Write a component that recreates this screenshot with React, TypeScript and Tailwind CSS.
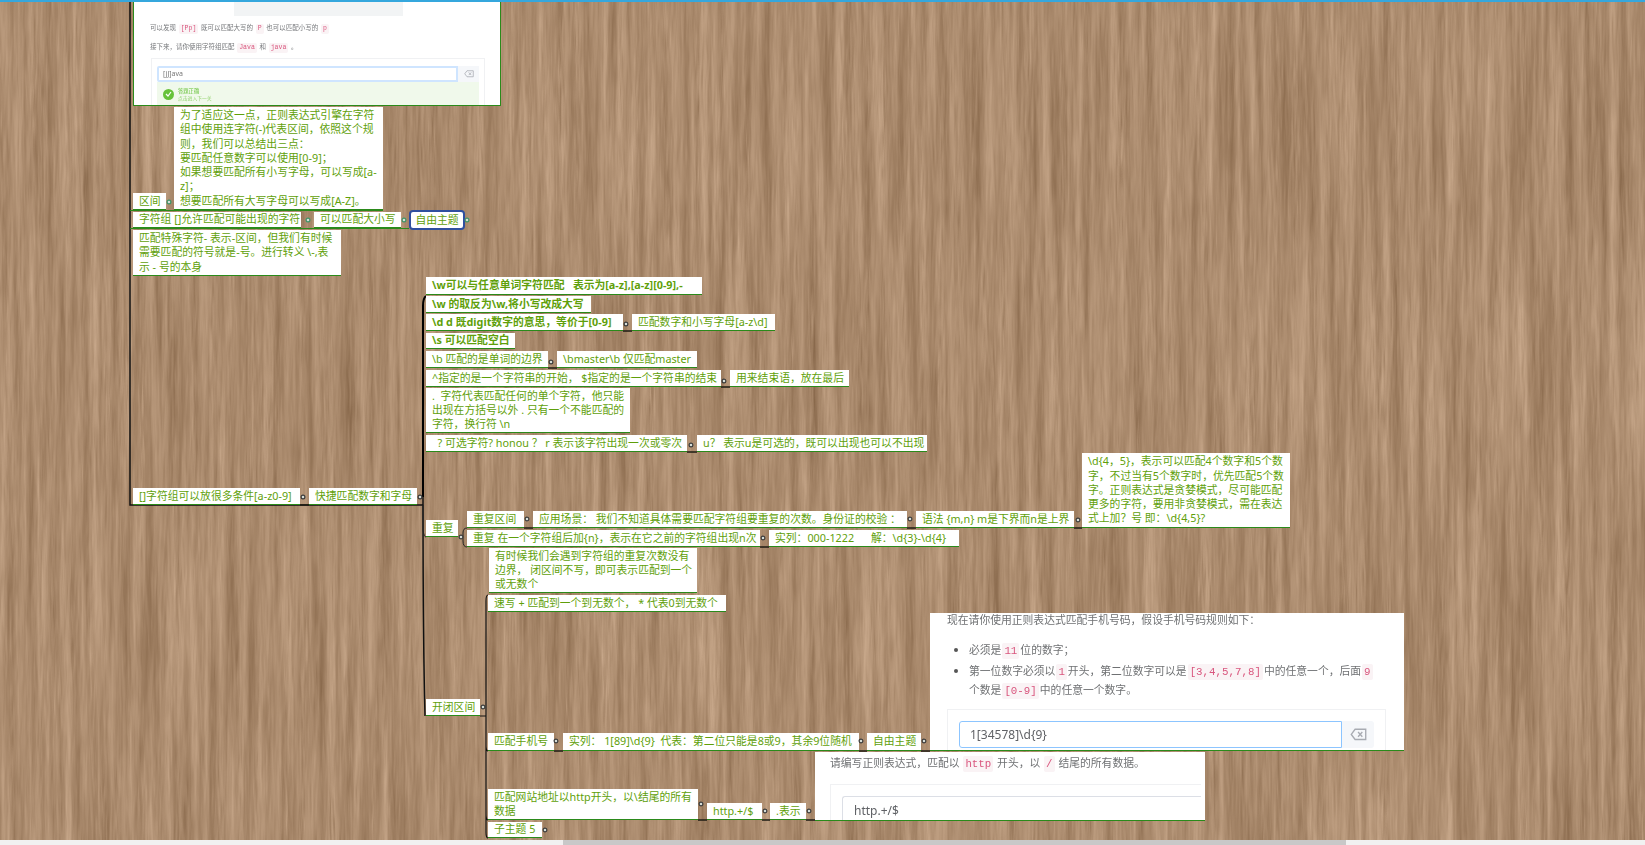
const nodes = [
  { x: 133, y: 193, r: 166, b: 210, t: ["区间"] },
  {
    x: 174, y: 107, r: 383, b: 210,
    t: [
      "为了适应这一点，正则表达式引擎在字符",
      "组中使用连字符(-)代表区间，依照这个规",
      "则，我们可以总结出三点：",
      "要匹配任意数字可以使用[0-9]；",
      "如果想要匹配所有小写字母，可以写成[a-",
      "z]；",
      "想要匹配所有大写字母可以写成[A-Z]。",
    ],
  },
  { x: 133, y: 212, r: 301, b: 228, t: ["字符组 []允许匹配可能出现的字符"] },
  { x: 314, y: 212, r: 401, b: 228, t: ["可以匹配大小写"] },
  {
    x: 133, y: 230, r: 341, b: 276,
    t: ["匹配特殊字符- 表示-区间，但我们有时候", "需要匹配的符号就是-号。进行转义 \\-,表", "示 - 号的本身"],
  },
  { x: 426, y: 277, r: 702, b: 295, bold: true, t: ["\\w可以与任意单词字符匹配   表示为[a-z],[a-z][0-9],-"] },
  { x: 426, y: 296, r: 591, b: 313, bold: true, t: ["\\w 的取反为\\w,将小写改成大写"] },
  { x: 426, y: 314, r: 623, b: 331, bold: true, t: ["\\d d 既digit数字的意思，等价于[0-9]"] },
  { x: 632, y: 314, r: 775, b: 331, t: ["匹配数字和小写字母[a-z\\d]"] },
  { x: 426, y: 333, r: 515, b: 349, bold: true, t: ["\\s 可以匹配空白"] },
  { x: 426, y: 351, r: 548, b: 368, t: ["\\b 匹配的是单词的边界"] },
  { x: 557, y: 351, r: 697, b: 368, t: ["\\bmaster\\b 仅匹配master"] },
  { x: 426, y: 370, r: 721, b: 387, t: ["^指定的是一个字符串的开始， $指定的是一个字符串的结束"] },
  { x: 730, y: 370, r: 849, b: 387, t: ["用来结束语，放在最后"] },
  {
    x: 426, y: 388, r: 630, b: 433,
    t: [".  字符代表匹配任何的单个字符，他只能", "出现在方括号以外 . 只有一个不能匹配的", "字符，换行符 \\n"],
  },
  { x: 426, y: 435, r: 687, b: 452, t: ["  ? 可选字符? honou ？ r 表示该字符出现一次或零次"] },
  { x: 697, y: 435, r: 927, b: 452, t: ["u？ 表示u是可选的，既可以出现也可以不出现"] },
  { x: 133, y: 488, r: 300, b: 505, t: ["[]字符组可以放很多条件[a-z0-9]"] },
  { x: 309, y: 488, r: 417, b: 505, t: ["快捷匹配数字和字母"] },
  { x: 426, y: 520, r: 458, b: 537, t: ["重复"] },
  { x: 467, y: 511, r: 524, b: 528, t: ["重复区间"] },
  { x: 533, y: 511, r: 907, b: 528, t: ["应用场景： 我们不知道具体需要匹配字符组要重复的次数。身份证的校验 ："] },
  { x: 916, y: 511, r: 1074, b: 528, t: ["语法 {m,n} m是下界而n是上界"] },
  {
    x: 1082, y: 453, r: 1290, b: 528,
    t: [
      "\\d{4，5}，表示可以匹配4个数字和5个数",
      "字，不过当有5个数字时，优先匹配5个数",
      "字。正则表达式是贪婪模式，尽可能匹配",
      "更多的字符，要用非贪婪模式，需在表达",
      "式上加？号 即：\\d{4,5}?",
    ],
  },
  { x: 467, y: 530, r: 760, b: 547, t: ["重复 在一个字符组后加{n}，表示在它之前的字符组出现n次"] },
  { x: 769, y: 530, r: 959, b: 547, t: ["实列：000-1222      解：\\d{3}-\\d{4}"] },
  {
    x: 489, y: 548, r: 697, b: 593,
    t: ["有时候我们会遇到字符组的重复次数没有", "边界， 闭区间不写，即可表示匹配到一个", "或无数个"],
  },
  { x: 488, y: 595, r: 726, b: 612, t: ["速写 + 匹配到一个到无数个， * 代表0到无数个"] },
  { x: 426, y: 699, r: 480, b: 716, t: ["开闭区间"] },
  { x: 488, y: 733, r: 554, b: 751, t: ["匹配手机号"] },
  { x: 563, y: 733, r: 859, b: 751, t: ["实列： 1[89]\\d{9}  代表：第二位只能是8或9，其余9位随机"] },
  { x: 867, y: 733, r: 921, b: 751, t: ["自由主题"] },
  { x: 488, y: 789, r: 698, b: 820, t: ["匹配网站地址以http开头，以\\结尾的所有", "数据"] },
  { x: 707, y: 803, r: 762, b: 820, t: ["http.+/$"] },
  { x: 770, y: 803, r: 806, b: 820, t: [".表示"] },
  { x: 488, y: 822, r: 542, b: 838, t: ["子主题 5"] },
];

// dots: x, y, true = green ring (upper part of the map)
const dots: [number, number, boolean][] = [
  [169, 202, true], [308, 220, true], [404, 220, true], [467, 220, true],
  [303, 497, false], [420, 497, false], [461, 537, false], [527, 519, false], [910, 519, false], [1078, 520, false],
  [763, 538, false], [626, 324, false], [551, 362, false], [724, 381, false], [691, 445, false],
  [483, 707, false], [556, 741, false], [861, 741, false], [924, 741, false],
  [701, 804, false], [765, 811, false], [809, 811, false], [545, 830, false],
];

const stubs: [number, number, number][] = [
  [623, 632, 331], [548, 557, 368], [721, 730, 387], [687, 697, 452], [300, 309, 505],
  [524, 533, 528], [907, 916, 528], [1074, 1082, 528], [760, 769, 547],
  [554, 563, 751], [859, 867, 751], [921, 930, 751], [698, 707, 820], [762, 770, 820], [806, 815, 820],
];

function Wood() {
  return (
    <svg className="absolute inset-0" width="1645" height="845">
      <filter id="wood" x="0" y="0" width="100%" height="100%" colorInterpolationFilters="sRGB">
        <feTurbulence type="fractalNoise" baseFrequency="0.11 0.004" numOctaves="3" seed="7" result="bands" />
        <feTurbulence type="fractalNoise" baseFrequency="0.5 0.03" numOctaves="2" seed="4" result="grain" />
        <feComposite in="bands" in2="grain" operator="arithmetic" k1="0" k2="0.7" k3="0.3" k4="0" />
        <feColorMatrix
          type="matrix"
          values="0.36 0 0 0 0.49  0.36 0 0 0 0.365  0.36 0 0 0 0.25  0 0 0 0 1"
        />
      </filter>
      <rect width="1645" height="845" filter="url(#wood)" />
    </svg>
  );
}

function Lines() {
  return (
    <svg className="absolute inset-0" width="1645" height="845" fill="none">
      <path d="M130 0V505H423" stroke="#111" strokeWidth="1.5" />
      <path d="M426 296Q423 298 423 306V497" stroke="#000" strokeWidth="2" />
      <path d="M423 497C423 560 423 640 425 716" stroke="#111" strokeWidth="1.5" />
      <path d="M423 505V530Q424 537 426 537" stroke="#222" strokeWidth="1" />
      <path d="M459 537H463M467 528Q463 528 463 533V541Q463 547 467 547" stroke="#222" strokeWidth="1" />
      <path d="M480 716H486M488 595Q486 595 486 601V832Q486 838 488 838M486 745Q486 751 488 751M486 814Q486 820 488 820" stroke="#111" strokeWidth="1.2" />
      {stubs.map(([a, b, y]) => (
        <path key={a + "-" + y} d={`M${a} ${y}H${b}`} stroke="#1d1a12" strokeWidth="1.5" />
      ))}
      <path d="M130 210.5H383M130 228.5H409" stroke="#2a8a1a" strokeWidth="1" />
    </svg>
  );
}

function Dots() {
  return (
    <svg className="absolute inset-0" width="1645" height="845">
      {dots.map(([x, y, g]) => (
        <circle key={x + "-" + y} cx={x} cy={y} r="1.9" fill="#d6dcd6" stroke={g ? "#3f9467" : "#3a3a3a"} strokeWidth="1.2" />
      ))}
    </svg>
  );
}

function Code({ children }: { children: React.ReactNode }) {
  return (
    <code className="mx-[1px] inline-block rounded-[2px] bg-[#faf3f5] px-[2px] py-[1px] align-baseline font-['Liberation_Mono',monospace] leading-[1.3] text-[#d9567e]">
      {children}
    </code>
  );
}

function DeleteIcon({ size }: { size: number }) {
  return (
    <svg width={size} height={size * 0.75} viewBox="0 0 20 15" fill="none" stroke="#a8abb2" strokeWidth="1.6">
      <path d="M6 1.5H18.5V13.5H6L1.5 7.5Z" />
      <path d="M9.5 4.8L14.5 10.2M14.5 4.8L9.5 10.2" />
    </svg>
  );
}

function TopPanel() {
  return (
    <div className="absolute left-[133px] top-0 h-[106px] w-[368px] overflow-hidden border-x border-b border-[#2a8a1a] bg-white">
      <div className="blur-[0.35px]">
        <div className="ml-[100px] h-[16px] w-[169px] bg-[#f2f4f5]" />
        <div className="ml-[16px] mt-[5px] h-[14px] text-[6.5px] leading-[14px] text-[#77797c]">
          可以发现 <Code>[Pp]</Code> 既可以匹配大写的 <Code>P</Code> 也可以匹配小写的 <Code>p</Code>
        </div>
        <div className="ml-[16px] mt-[5px] h-[14px] text-[6.5px] leading-[14px] text-[#77797c]">
          接下来，请你使用字符组匹配 <Code>Java</Code> 和 <Code>java</Code> 。
        </div>
        <div className="ml-[17px] mt-[4px] h-[60px] w-[334px] border border-[#f0f1f3] px-[5px] pt-[7px]">
          <div className="flex h-[16px]">
            <div className="flex w-[301px] items-center rounded-l-[2px] border-2 border-[#cfe5ff] pl-[4px] text-[7px] text-[#777]">
              [jJ]ava
            </div>
            <div className="flex flex-1 items-center justify-center bg-[#f5f7fa]">
              <DeleteIcon size={10} />
            </div>
          </div>
          <div className="flex h-[24px] items-center gap-[4px] bg-[#f0f9eb] pl-[6px]">
            <div className="flex h-[11px] w-[11px] items-center justify-center rounded-full bg-[#67c23a]">
              <svg width="7" height="6" viewBox="0 0 7 6" fill="none" stroke="white" strokeWidth="1.2">
                <path d="M1 3L3 5L6 1" />
              </svg>
            </div>
            <div>
              <div className="text-[5.3px] leading-[8px] text-[#67c23a]">答题正确</div>
              <div className="text-[4.8px] leading-[7px] text-[#8fd16a]">点击进入下一关</div>
            </div>
          </div>
        </div>
      </div>
    </div>
  );
}

function PhonePanel() {
  return (
    <div className="absolute left-[930px] top-[613px] h-[138px] w-[474px] overflow-hidden border-b border-[#2a8a1a] bg-white">
      <div className="blur-[0.3px] text-[10.8px] text-[#6f7173]">
        <div className="ml-[17px] leading-[14px]">现在请你使用正则表达式匹配手机号码，假设手机号码规则如下：</div>
        <ul className="ml-[28px] mt-[13px] list-disc pl-[11px] leading-[19px] marker:text-[#555]">
          <li>
            必须是<Code>11</Code>位的数字；
          </li>
          <li className="mt-[2px] w-[430px]">
            第一位数字必须以<Code>1</Code>开头，第二位数字可以是<Code>[3,4,5,7,8]</Code>中的任意一个，后面<Code>9</Code>
            <br />
            个数是<Code>[0-9]</Code>中的任意一个数字。
          </li>
        </ul>
        <div className="ml-[17px] mt-[10px] h-[60px] w-[439px] border border-[#f0f1f3] px-[11px] pt-[11px]">
          <div className="flex h-[27px]">
            <div className="flex w-[383px] items-center rounded-l-[3px] border border-[#8cc5ff] pl-[10px] text-[12px] text-[#606266]">
              1[34578]\d{"{9}"}
            </div>
            <div className="flex flex-1 items-center justify-center rounded-r-[3px] bg-[#f5f7fa]">
              <DeleteIcon size={17} />
            </div>
          </div>
        </div>
      </div>
    </div>
  );
}

function HttpPanel() {
  return (
    <div className="absolute left-[815px] top-[752px] h-[69px] w-[390px] overflow-hidden border-b border-[#2a8a1a] bg-white">
      <div className="blur-[0.3px]">
        <div className="ml-[15px] mt-[4px] text-[10.8px] leading-[14px] text-[#6f7173]">
          请编写正则表达式，匹配以 <Code>http</Code> 开头，以 <Code>/</Code> 结尾的所有数据。
        </div>
        <div className="ml-[15px] mt-[12px] h-[40px] w-[371px] border-l border-t border-[#f0f1f3] pl-[11px] pt-[11px]">
          <div className="flex h-[30px] items-start rounded-tl-[3px] border-l border-t border-[#dcdfe6] pl-[11px] pt-[5px] text-[12px] text-[#606266]">
            http.+/$
          </div>
        </div>
      </div>
    </div>
  );
}

export default function App() {
  return (
    <div className="relative h-[845px] w-[1645px] overflow-hidden bg-[#ab8b6e] font-['Noto_Sans','Noto_Sans_CJK_SC','Liberation_Sans',sans-serif]">
      <Wood />
      <Lines />
      <div className="absolute left-0 right-0 top-0 z-10 h-[2px] bg-[#35a7dd]" />
      <TopPanel />
      <PhonePanel />
      <HttpPanel />
      {nodes.map((n) => (
        <div
          key={n.x + "-" + n.y}
          className={`absolute flex flex-col justify-center border-b border-[#2a8a1a] bg-white pl-[6px] text-[10.8px] leading-[14.3px] whitespace-pre text-[#5f9f0a] ${n.bold ? "font-bold" : ""}`}
          style={{ left: n.x, top: n.y, width: n.r - n.x, height: n.b - n.y }}
        >
          {n.t.map((line) => (
            <div key={line}>{line}</div>
          ))}
        </div>
      ))}
      <div className="absolute left-[409px] top-[210px] flex h-[20px] w-[56px] items-center justify-center rounded-[4px] border-2 border-[#2f4f9f] bg-white text-[10.8px] text-[#5f9f0a]">
        自由主题
      </div>
      <Dots />
      <div className="absolute bottom-0 left-0 right-0 flex h-[5px] bg-[#f1f1f1]">
        <div className="ml-[563px] w-[783px] bg-[#c8c8c8]" />
      </div>
    </div>
  );
}
